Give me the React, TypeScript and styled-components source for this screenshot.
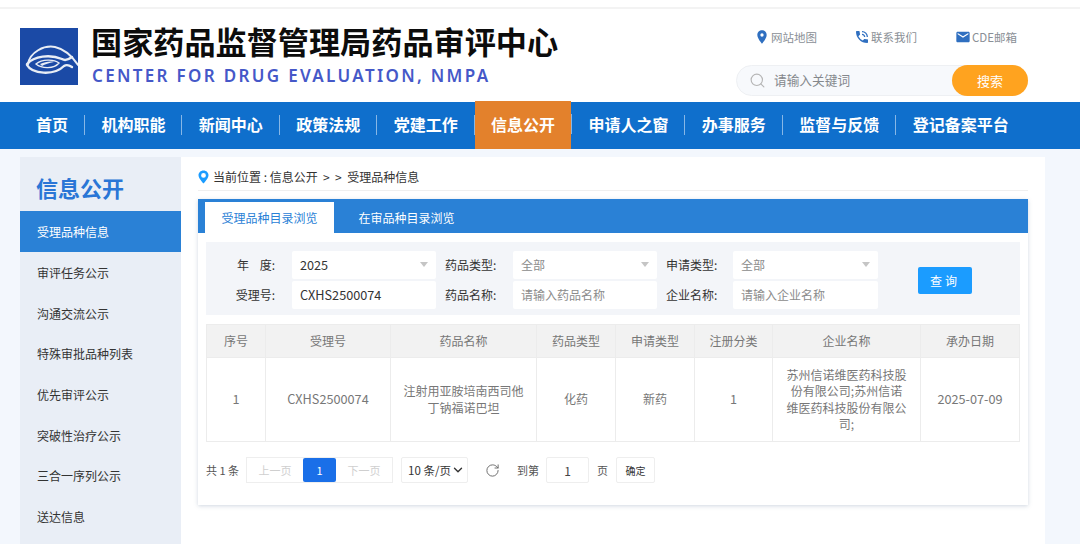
import styled, { createGlobalStyle } from 'styled-components';
import { ChevronDown, RotateCw, Search } from 'lucide-react';
import { MdEmail, MdLocationOn, MdPhoneInTalk } from 'react-icons/md';

const CJK = `"Noto Sans CJK SC", "Noto Sans", sans-serif`;

const GlobalStyle = createGlobalStyle`
  html, body {
    margin: 0;
    padding: 0;
    height: 544px;
    overflow: hidden;
    background: #fff;
    font-family: "Noto Sans CJK SC", "Noto Sans", sans-serif;
  }
  * { box-sizing: border-box; }
`;

const Page = styled.div`
  width: 1080px;
  height: 544px;
  overflow: hidden;
  background: #f3f7fd;
`;

const TopStrip = styled.div`
  height: 9px;
  background: #fff;
  border-bottom: 2px solid #f3f3f3;
`;

const Header = styled.header`
  height: 93px;
  background: #fff;
  display: flex;
  justify-content: space-between;
  padding: 0 52px 0 20px;
`;

const Brand = styled.div`
  display: flex;
  align-items: flex-start;
  padding-top: 12px;
`;

const LogoBox = styled.svg`
  width: 58px;
  height: 57px;
  margin-top: 7px;
  margin-right: 13px;
  flex: none;
`;

const TitleBlock = styled.div`
  display: flex;
  flex-direction: column;
`;

const CnTitle = styled.div`
  font-size: 31.15px;
  line-height: 40px;
  font-weight: 700;
  color: #0c0c0c;
  white-space: nowrap;
`;

const EnTitle = styled.div`
  font-family: "Noto Sans", sans-serif;
  font-size: 17px;
  line-height: 22px;
  margin-top: 4px;
  margin-left: 1px;
  font-weight: 600;
  letter-spacing: 2.32px;
  color: #4558c8;
  white-space: nowrap;
`;

const HeaderRight = styled.div`
  width: 292px;
  display: flex;
  flex-direction: column;
`;

const QuickLinks = styled.div`
  display: flex;
  height: 56px;
  padding: 19px 0 0 18px;
`;

const QuickLink = styled.a<{ $w: number }>`
  width: ${(p) => p.$w}px;
  display: flex;
  align-items: center;
  gap: 1px;
  height: 18px;
  font-size: 11.5px;
  color: #8a8f96;
  white-space: nowrap;
  svg { color: #2f6fc0; flex: none; }
`;

const SearchBar = styled.div`
  height: 31px;
  display: flex;
  align-items: center;
  background: #f7f9fc;
  border: 1px solid #eef0f3;
  border-radius: 16px;
  padding-left: 12px;
  color: #b5b5b5;
`;

const SearchHint = styled.span`
  flex: 1;
  margin-left: 8px;
  font-size: 12.7px;
  line-height: 28px;
  padding-bottom: 1px;
  color: #85888c;
`;

const SearchButton = styled.button`
  width: 76px;
  height: 31px;
  margin-right: -1px;
  border: 0;
  border-radius: 16px;
  background: #ffa31f;
  color: #fff;
  font-family: ${CJK};
  font-size: 13px;
  padding: 0;
`;

const Nav = styled.nav`
  height: 47px;
  background: #0f6fcc;
  display: flex;
  padding-left: 20px;
`;

const NavItem = styled.a<{ $active?: boolean; $last?: boolean }>`
  position: relative;
  display: flex;
  align-items: center;
  padding: 0 16px 3px 16px;
  margin-right: 1.4px;
  font-size: 16px;
  font-weight: 700;
  color: #fff;
  white-space: nowrap;
  background: ${(p) => (p.$active ? '#e3812c' : 'transparent')};
  margin-top: ${(p) => (p.$active ? '-1px' : '0')};
  &::after {
    content: '';
    display: ${(p) => (p.$last ? 'none' : 'block')};
    position: absolute;
    right: -1px;
    top: 13px;
    height: 20px;
    width: 1px;
    background: rgba(255, 255, 255, 0.5);
  }
`;

const Body = styled.div`
  display: flex;
  height: 395px;
  padding: 8px 35px 0 20px;
`;

const Sidebar = styled.aside`
  width: 161px;
  flex: none;
  background: #e9eef6;
`;

const SideTitle = styled.div`
  height: 54px;
  padding: 15px 0 0 16px;
  font-size: 22px;
  line-height: 30px;
  font-weight: 700;
  color: #2a76d6;
`;

const SideItem = styled.a<{ $active?: boolean }>`
  display: flex;
  align-items: center;
  height: ${(p) => (p.$active ? '41px' : '40.7px')};
  padding-left: 17px;
  font-size: 12px;
  color: ${(p) => (p.$active ? '#fff' : '#333')};
  background: ${(p) => (p.$active ? '#2a81d6' : 'transparent')};
`;

const Main = styled.main`
  flex: 1;
  background: #fff;
  padding: 0 17px;
`;

const Crumbs = styled.div`
  height: 34px;
  padding-top: 11px;
  display: flex;
  align-items: flex-start;
  gap: 4px;
  border-bottom: 1px solid #efefef;
  font-size: 12px;
  line-height: 18px;
  color: #333;
  white-space: pre;
  svg { margin-top: 2px; flex: none; }
`;

const Card = styled.section`
  margin-top: 8px;
  height: 306px;
  background: #fff;
  box-shadow: 0 1px 4px rgba(120, 140, 170, 0.35);
`;

const TabBar = styled.div`
  height: 34px;
  background: #2a81d6;
  display: flex;
  align-items: flex-end;
  gap: 8px;
  padding-left: 7px;
`;

const Tab = styled.a<{ $active?: boolean }>`
  width: 129px;
  height: 31px;
  display: flex;
  align-items: center;
  justify-content: center;
  font-size: 12px;
  color: ${(p) => (p.$active ? '#2a81d6' : '#fff')};
  background: ${(p) => (p.$active ? '#fff' : 'transparent')};
`;

const CardBody = styled.div`
  padding: 9px 8px 0;
`;

const Filter = styled.div`
  height: 73px;
  background: #f3f5f9;
  padding-top: 9px;
  display: grid;
  grid-template-columns: 86px 144px 77px 144px 76px 145px 40px 54px;
  grid-template-rows: 28px 28px;
  row-gap: 2px;
  align-items: center;
`;

const FieldLabel = styled.label<{ $right?: boolean }>`
  grid-column: ${(p) => (p.$right ? '1' : 'auto')};
  font-size: 12px;
  color: #333;
  white-space: pre;
  text-align: ${(p) => (p.$right ? 'right' : 'left')};
  padding: ${(p) => (p.$right ? '0 17px 2px 0' : '0 0 2px 9px')};
`;

const Field = styled.div<{ $muted?: boolean; $select?: boolean; $latin?: boolean }>`
  position: relative;
  height: 28px;
  background: #fff;
  border-radius: 2px;
  padding: 0 0 2px 8px;
  display: flex;
  align-items: center;
  font-size: ${(p) => (p.$latin ? '12.7px' : '12px')};
  color: ${(p) => (p.$muted ? '#8c8c8c' : '#333')};
  white-space: nowrap;
  &::after {
    content: '';
    display: ${(p) => (p.$select ? 'block' : 'none')};
    position: absolute;
    right: 8px;
    top: 11px;
    border-left: 4px solid transparent;
    border-right: 4px solid transparent;
    border-top: 5px solid #c5c5c5;
  }
`;

const QueryCell = styled.div`
  grid-column: 8;
  grid-row: 1 / span 2;
`;

const QueryButton = styled.button`
  width: 54px;
  height: 27px;
  border: 0;
  border-radius: 2px;
  background: #1b9cff;
  color: #fff;
  font-family: ${CJK};
  font-size: 12px;
  letter-spacing: 3px;
  padding: 0;
`;

const Table = styled.table`
  width: 813px;
  margin-top: 9px;
  border-collapse: collapse;
  table-layout: fixed;
  font-size: 12px;
  color: #777;
`;

const Th = styled.th`
  height: 33px;
  padding: 0 0 1px;
  font-weight: 400;
  background: #f2f2f2;
  border: 1px solid #ececec;
`;

const Td = styled.td<{ $latin?: boolean }>`
  height: 84px;
  padding: 0 12px;
  text-align: center;
  line-height: 16.5px;
  font-size: ${(p) => (p.$latin ? '12.7px' : '12px')};
  border: 1px solid #ececec;
`;

const Col = styled.col<{ $w: number }>`
  width: ${(p) => p.$w}px;
`;

const Pager = styled.div`
  display: flex;
  align-items: center;
  height: 26px;
  margin-top: 15px;
  font-size: 11px;
  color: #555;
`;

const PagerGroup = styled.div`
  display: flex;
  margin-left: 7px;
  height: 26px;
  border: 1px solid #eee;
`;

const PageCell = styled.span<{ $current?: boolean; $w: number }>`
  width: ${(p) => p.$w}px;
  display: flex;
  align-items: center;
  justify-content: center;
  font-size: 11px;
  color: ${(p) => (p.$current ? '#fff' : '#cfcfcf')};
  background: ${(p) => (p.$current ? '#1a6fe8' : '#fff')};
  border-radius: ${(p) => (p.$current ? '2px' : '0')};
`;

const PageSize = styled.div`
  width: 67px;
  height: 26px;
  margin-left: 8px;
  border: 1px solid #eee;
  border-radius: 2px;
  display: flex;
  align-items: center;
  justify-content: space-between;
  padding: 0 2px 0 6px;
  font-size: 11.5px;
  color: #333;
  white-space: nowrap;
`;

const RefreshWrap = styled.span`
  display: flex;
  margin: 0 17px;
  color: #666;
`;

const JumpInput = styled.span`
  width: 43px;
  height: 26px;
  margin: 0 8px 0 7px;
  border: 1px solid #eee;
  border-radius: 2px;
  display: flex;
  align-items: center;
  justify-content: center;
  font-size: 12px;
  color: #444;
`;

const ConfirmButton = styled.span`
  width: 39px;
  height: 26px;
  margin-left: 8px;
  border: 1px solid #eee;
  border-radius: 2px;
  display: flex;
  align-items: center;
  justify-content: center;
  font-size: 10px;
  color: #333;
`;

const navItems = ['首页', '机构职能', '新闻中心', '政策法规', '党建工作', '信息公开', '申请人之窗', '办事服务', '监督与反馈', '登记备案平台'];
const sideItems = ['受理品种信息', '审评任务公示', '沟通交流公示', '特殊审批品种列表', '优先审评公示', '突破性治疗公示', '三合一序列公示', '送达信息'];
const columns: [string, number][] = [
  ['序号', 59],
  ['受理号', 125],
  ['药品名称', 146],
  ['药品类型', 79],
  ['申请类型', 79],
  ['注册分类', 78],
  ['企业名称', 148],
  ['承办日期', 99],
];

function Logo() {
  return (
    <LogoBox viewBox="0 0 58 57">
      <rect width="58" height="57" fill="#1b4aa6" />
      <g fill="none" stroke="#e8edf5" strokeLinecap="round">
        <path d="M8 36 C10 24 24 17 35 19 C44 21 52 28 58 37" strokeWidth="2" />
        <path d="M7 36 C14 28 30 26 42 31 C45 33 48 32 52 29" strokeWidth="2.4" />
        <path d="M7 37 C12 46 34 48 44 38 C47 36 49 37 52 39" strokeWidth="2.4" />
        <path d="M16 36 C22 31 34 31 39 35 C34 41 22 41 16 36 Z" strokeWidth="1.4" />
      </g>
      <path d="M20 36 C25 34 30 33 34 34 C29 35 25 36 22 38 Z" fill="#e8edf5" />
    </LogoBox>
  );
}

function PinOutline() {
  return (
    <svg width="11" height="14" viewBox="0 0 11 14">
      <path
        d="M5.5 0.5 C2.5 0.5 0.5 2.7 0.5 5.3 C0.5 8.6 5.5 13.5 5.5 13.5 C5.5 13.5 10.5 8.6 10.5 5.3 C10.5 2.7 8.5 0.5 5.5 0.5 Z M5.5 3 A2.4 2.4 0 1 1 5.5 7.8 A2.4 2.4 0 1 1 5.5 3 Z"
        fill="#1b9cff"
        fillRule="evenodd"
      />
    </svg>
  );
}

export default function App() {
  return (
    <Page>
      <GlobalStyle />
      <TopStrip />
      <Header>
        <Brand>
          <Logo />
          <TitleBlock>
            <CnTitle>国家药品监督管理局药品审评中心</CnTitle>
            <EnTitle>CENTER FOR DRUG EVALUATION, NMPA</EnTitle>
          </TitleBlock>
        </Brand>
        <HeaderRight>
          <QuickLinks>
            <QuickLink $w={100}><MdLocationOn size={16} />网站地图</QuickLink>
            <QuickLink $w={101}><MdPhoneInTalk size={16} />联系我们</QuickLink>
            <QuickLink $w={60}><MdEmail size={16} />CDE邮箱</QuickLink>
          </QuickLinks>
          <SearchBar>
            <Search size={17} strokeWidth={1.6} />
            <SearchHint>请输入关键词</SearchHint>
            <SearchButton>搜索</SearchButton>
          </SearchBar>
        </HeaderRight>
      </Header>
      <Nav>
        {navItems.map((item, i) => (
          <NavItem key={item} $active={item === '信息公开'} $last={i === navItems.length - 1}>
            {item}
          </NavItem>
        ))}
      </Nav>
      <Body>
        <Sidebar>
          <SideTitle>信息公开</SideTitle>
          {sideItems.map((item, i) => (
            <SideItem key={item} $active={i === 0}>{item}</SideItem>
          ))}
        </Sidebar>
        <Main>
          <Crumbs>
            <PinOutline />
            当前位置 : 信息公开  &gt;  &gt;  受理品种信息
          </Crumbs>
          <Card>
            <TabBar>
              <Tab $active>受理品种目录浏览</Tab>
              <Tab>在审品种目录浏览</Tab>
            </TabBar>
            <CardBody>
              <Filter>
                <FieldLabel $right>{'年    度:'}</FieldLabel>
                <Field $select $latin>2025</Field>
                <FieldLabel>药品类型:</FieldLabel>
                <Field $select $muted>全部</Field>
                <FieldLabel>申请类型:</FieldLabel>
                <Field $select $muted>全部</Field>
                <QueryCell><QueryButton>查询</QueryButton></QueryCell>
                <FieldLabel $right>受理号:</FieldLabel>
                <Field $latin>CXHS2500074</Field>
                <FieldLabel>药品名称:</FieldLabel>
                <Field $muted>请输入药品名称</Field>
                <FieldLabel>企业名称:</FieldLabel>
                <Field $muted>请输入企业名称</Field>
              </Filter>
              <Table>
                <colgroup>
                  {columns.map(([name, w]) => <Col key={name} $w={w} />)}
                </colgroup>
                <thead>
                  <tr>
                    {columns.map(([name]) => <Th key={name}>{name}</Th>)}
                  </tr>
                </thead>
                <tbody>
                  <tr>
                    <Td $latin>1</Td>
                    <Td $latin>CXHS2500074</Td>
                    <Td>注射用亚胺培南西司他丁钠福诺巴坦</Td>
                    <Td>化药</Td>
                    <Td>新药</Td>
                    <Td $latin>1</Td>
                    <Td>苏州信诺维医药科技股份有限公司;苏州信诺维医药科技股份有限公司;</Td>
                    <Td $latin>2025-07-09</Td>
                  </tr>
                </tbody>
              </Table>
              <Pager>
                共 1 条
                <PagerGroup>
                  <PageCell $w={56}>上一页</PageCell>
                  <PageCell $w={33} $current>1</PageCell>
                  <PageCell $w={56}>下一页</PageCell>
                </PagerGroup>
                <PageSize>10 条/页<ChevronDown size={14} strokeWidth={2.4} /></PageSize>
                <RefreshWrap><RotateCw size={15} strokeWidth={1.5} /></RefreshWrap>
                到第
                <JumpInput>1</JumpInput>
                页
                <ConfirmButton>确定</ConfirmButton>
              </Pager>
            </CardBody>
          </Card>
        </Main>
      </Body>
    </Page>
  );
}
